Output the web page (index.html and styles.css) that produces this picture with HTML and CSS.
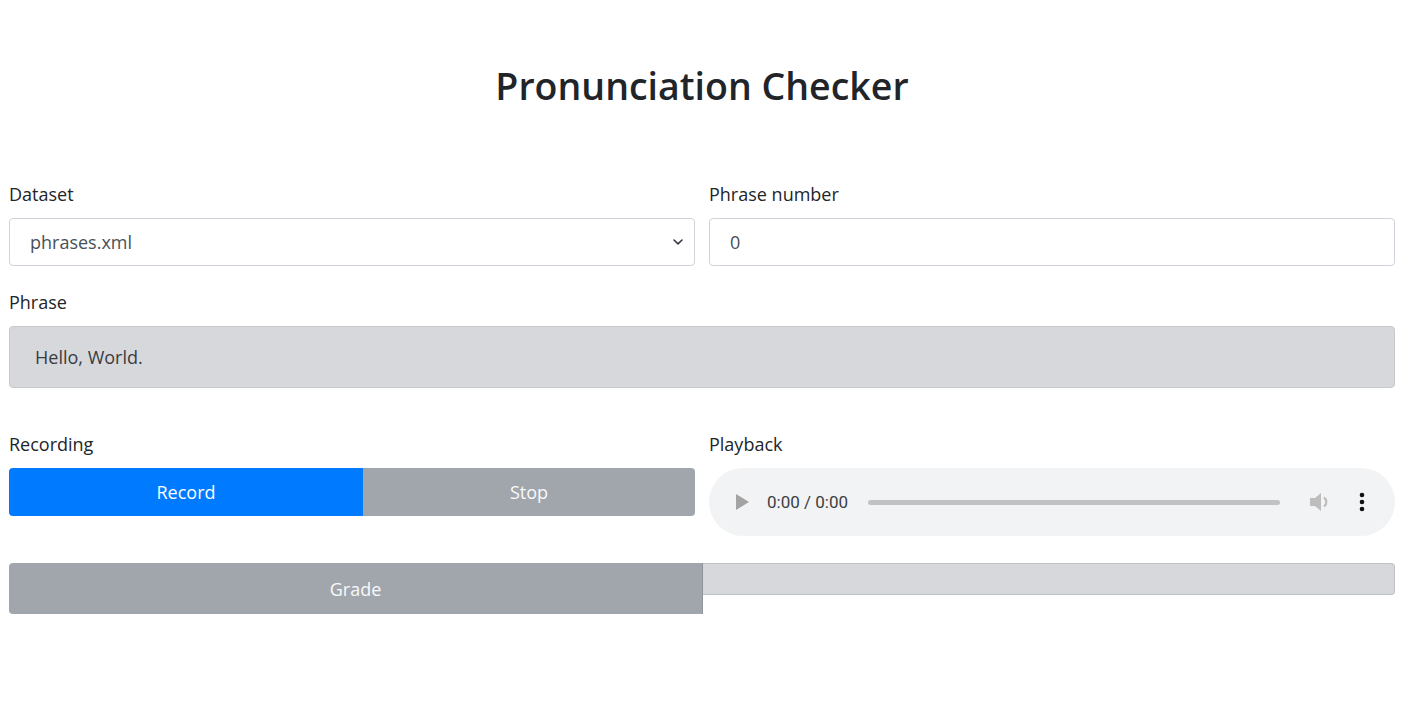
FILE: index.html
```html
<!DOCTYPE html>
<html lang="en">
<head>
<meta charset="utf-8">
<title>Pronunciation Checker</title>
<link rel="stylesheet" href="styles.css">
</head>
<body>
<div class="page">
  <h1 class="title">Pronunciation Checker</h1>

  <div class="row row-top">
    <div class="field">
      <label class="label">Dataset</label>
      <div class="select">
        <span class="select-text">phrases.xml</span>
        <svg class="chevron" width="12" height="8" viewBox="0 0 12 8"><path d="M2 2 L6 5.8 L10 2" fill="none" stroke="#343a40" stroke-width="1.6" stroke-linecap="round" stroke-linejoin="round"/></svg>
      </div>
    </div>
    <div class="field">
      <label class="label">Phrase number</label>
      <div class="input"><span class="input-text">0</span></div>
    </div>
  </div>

  <div class="field phrase-field">
    <label class="label">Phrase</label>
    <div class="phrase">Hello, World.</div>
  </div>

  <div class="row row-rec">
    <div class="field">
      <label class="label">Recording</label>
      <div class="btn-group">
        <button class="btn btn-record">Record</button>
        <button class="btn btn-stop">Stop</button>
      </div>
    </div>
    <div class="field">
      <label class="label">Playback</label>
      <div class="audio">
        <svg class="play" width="13" height="16" viewBox="0 0 13 16"><path d="M0 0 L13 8 L0 16 Z" fill="#a3a3a3"/></svg>
        <span class="time">0:00 / 0:00</span>
        <div class="track"></div>
        <svg class="vol" width="22" height="20" viewBox="0 0 22 20"><path d="M0 6 H5 L11 1 V19 L5 14 H0 Z" fill="#bdbdbd"/><path d="M14 5.5 A5.5 5.5 0 0 1 14 14.5" fill="none" stroke="#bdbdbd" stroke-width="2.2"/></svg>
        <svg class="dots" width="6" height="20" viewBox="0 0 6 20"><circle cx="3" cy="3" r="2.3" fill="#111"/><circle cx="3" cy="10" r="2.3" fill="#111"/><circle cx="3" cy="17" r="2.3" fill="#111"/></svg>
      </div>
    </div>
  </div>

  <div class="grade-row">
    <button class="btn btn-grade">Grade</button>
    <div class="progress"></div>
  </div>
</div>
</body>
</html>
```

FILE: styles.css
```css
html, body {
  margin: 0;
  padding: 0;
  background: #ffffff;
}

body {
  font-family: "Open Sans", "Noto Sans", "Liberation Sans", sans-serif;
  color: #212529;
}

.page {
  width: 1386px;
  margin-left: 9px;
}

.title {
  margin: 0;
  padding-top: 63px;
  font-size: 37.5px;
  line-height: 46px;
  font-weight: 600;
  text-align: center;
  color: #212529;
}

.row {
  display: grid;
  grid-template-columns: 1fr 1fr;
  column-gap: 14px;
}

.row-top {
  margin-top: 71px;
}

.field {
  display: flex;
  flex-direction: column;
}

.label {
  font-size: 18px;
  line-height: 28px;
  margin-bottom: 10px;
  color: #212529;
}

.select, .input {
  box-sizing: border-box;
  height: 48px;
  border: 1px solid #ced4da;
  border-radius: 4px;
  display: flex;
  align-items: center;
  padding: 0 10px 0 20px;
  font-size: 18px;
  color: #495057;
}

.select-text, .input-text {
  flex: 1;
}

.phrase-field {
  margin-top: 22px;
}

.phrase {
  box-sizing: border-box;
  height: 62px;
  background: #d6d8db;
  border: 1px solid #c6c8ca;
  border-radius: 4px;
  padding: 0 25px;
  display: flex;
  align-items: center;
  font-size: 18px;
  color: #383d41;
}

.row-rec {
  margin-top: 42px;
  align-items: start;
}

.btn-group {
  display: flex;
  height: 48px;
}

.btn {
  border: none;
  margin: 0;
  font-family: "Open Sans", "Noto Sans", "Liberation Sans", sans-serif;
  font-size: 18px;
  color: #ffffff;
  cursor: pointer;
}

.btn-record {
  flex: 0 0 354px;
  background: #007bff;
  border-radius: 4px 0 0 4px;
}

.btn-stop {
  flex: 1;
  background: #a1a6ad;
  border-radius: 0 4px 4px 0;
  color: #f8f9fa;
}

.audio {
  box-sizing: border-box;
  height: 68px;
  background: #f1f3f4;
  border-radius: 34px;
  display: flex;
  align-items: center;
  padding: 0 30px 0 27px;
}

.play {
  flex: none;
}

.time {
  margin-left: 18px;
  font-family: Roboto, "Open Sans", sans-serif;
  font-size: 17px;
  color: #3c4043;
  white-space: nowrap;
}

.track {
  flex: 1;
  height: 5px;
  border-radius: 3px;
  background: #c2c2c2;
  margin: 0 30px 0 20px;
}

.vol {
  flex: none;
  margin-right: 27px;
}

.dots {
  flex: none;
}

.grade-row {
  display: grid;
  grid-template-columns: 694px 1fr;
  margin-top: 27px;
  align-items: start;
}

.btn-grade {
  height: 51px;
  background: #a1a6ad;
  color: #f8f9fa;
  border-radius: 4px 0 0 4px;
  border-right: 1px solid #8e949a;
}

.progress {
  box-sizing: border-box;
  height: 32px;
  background: #d6d8db;
  border: 1px solid #bfc2c6;
  border-left: none;
  border-radius: 0 4px 4px 0;
}
```
